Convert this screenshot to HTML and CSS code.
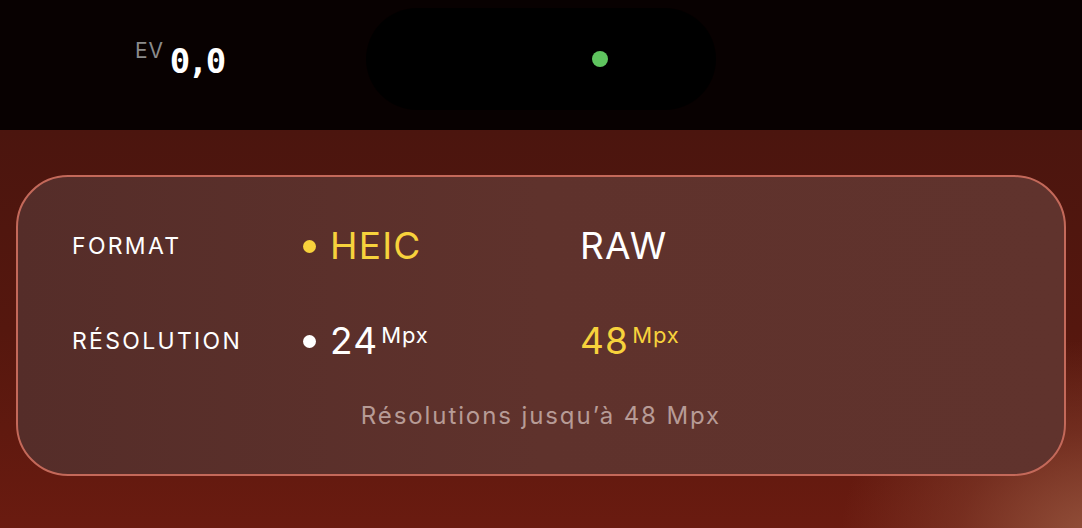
FILE: index.html
```html
<!DOCTYPE html>
<html lang="fr">
<head>
<meta charset="utf-8">
<link rel="stylesheet" href="styles.css">
</head>
<body>
<div class="screen">
  <header class="topbar">
    <div class="ev">
      <span class="ev-label">EV</span>
      <span class="ev-value">0,0</span>
    </div>
    <div class="island"><span class="green-dot"></span></div>
    <div class="spacer"></div>
  </header>
  <main class="stage">
    <section class="card">
      <div class="grid">
        <div class="label">FORMAT</div>
        <div class="option selected"><span class="dot yellow"></span><span class="big yellow-text">HEIC</span></div>
        <div class="option"><span class="big">RAW</span></div>

        <div class="label">RÉSOLUTION</div>
        <div class="option"><span class="dot white"></span><span class="big">24</span><span class="unit">Mpx</span></div>
        <div class="option yellow-text"><span class="big">48</span><span class="unit">Mpx</span></div>
      </div>
      <p class="note">Résolutions jusqu’à 48 Mpx</p>
    </section>
  </main>
</div>
</body>
</html>
```
FILE: styles.css
```css
* { box-sizing: border-box; }
html, body { margin: 0; padding: 0; }
body {
  width: 1082px;
  height: 528px;
  overflow: hidden;
  font-family: "Inter", "Liberation Sans", sans-serif;
  background: #0a0202;
}
.screen {
  width: 1082px;
  height: 528px;
  display: flex;
  flex-direction: column;
}
.topbar {
  height: 130px;
  flex: none;
  background: #080101;
  display: grid;
  grid-template-columns: 1fr 350px 1fr;
  align-items: start;
}
.ev {
  display: flex;
  align-items: flex-start;
  padding-left: 135px;
  padding-top: 40px;
}
.ev-label {
  color: #8b8b8b;
  font-size: 21px;
  line-height: 22px;
  letter-spacing: 0.8px;
  margin-right: 6px;
}
.ev-value {
  color: #ffffff;
  font-family: "DejaVu Sans Mono", monospace;
  font-weight: bold;
  font-size: 34px;
  line-height: 42px;
  letter-spacing: -2.5px;
}
.island {
  margin-top: 8px;
  height: 102px;
  border-radius: 51px;
  background: #000;
  display: flex;
  align-items: center;
  padding-left: 226px;
}
.green-dot {
  width: 16px;
  height: 16px;
  border-radius: 50%;
  background: #5fc45f;
}
.stage {
  flex: 1;
  padding: 45px 16px 0;
  background:
    radial-gradient(ellipse 260px 200px at 1100px 410px, rgba(150, 85, 62, 0.95), rgba(140, 75, 55, 0.4) 55%, rgba(140, 75, 55, 0) 100%),
    linear-gradient(180deg, #4b150e 0%, #55170e 50%, #6a1b10 100%);
}
.card {
  height: 301px;
  border-radius: 52px;
  border: 2px solid #c4695a;
  background: linear-gradient(90deg, #552d29 0%, #5f322c 50%, #60332d 100%);
  padding: 44px 0 0 54px;
}
.grid {
  display: grid;
  grid-template-columns: 231px 277px 1fr;
  grid-auto-rows: 50px;
  row-gap: 45px;
  align-items: center;
}
.label {
  color: #ffffff;
  font-size: 23px;
  letter-spacing: 2.3px;
  font-weight: 400;
}
.option {
  display: flex;
  align-items: center;
  color: #ffffff;
}
.big {
  font-size: 37px;
  line-height: 50px;
  letter-spacing: 1.2px;
}
.unit {
  font-size: 22px;
  align-self: flex-start;
  line-height: 20px;
  margin-top: 9px;
  margin-left: 3px;
  letter-spacing: 0.8px;
}
.dot {
  width: 13px;
  height: 13px;
  border-radius: 50%;
  margin-right: 14px;
  flex: none;
}
.dot.yellow { background: #f7d23c; }
.dot.white { background: #ffffff; }
.yellow-text { color: #f7d23c; }
.note {
  margin: 35px 0 0 -54px;
  text-align: center;
  color: #b79b96;
  font-size: 24px;
  line-height: 30px;
  letter-spacing: 1.9px;
}
```
